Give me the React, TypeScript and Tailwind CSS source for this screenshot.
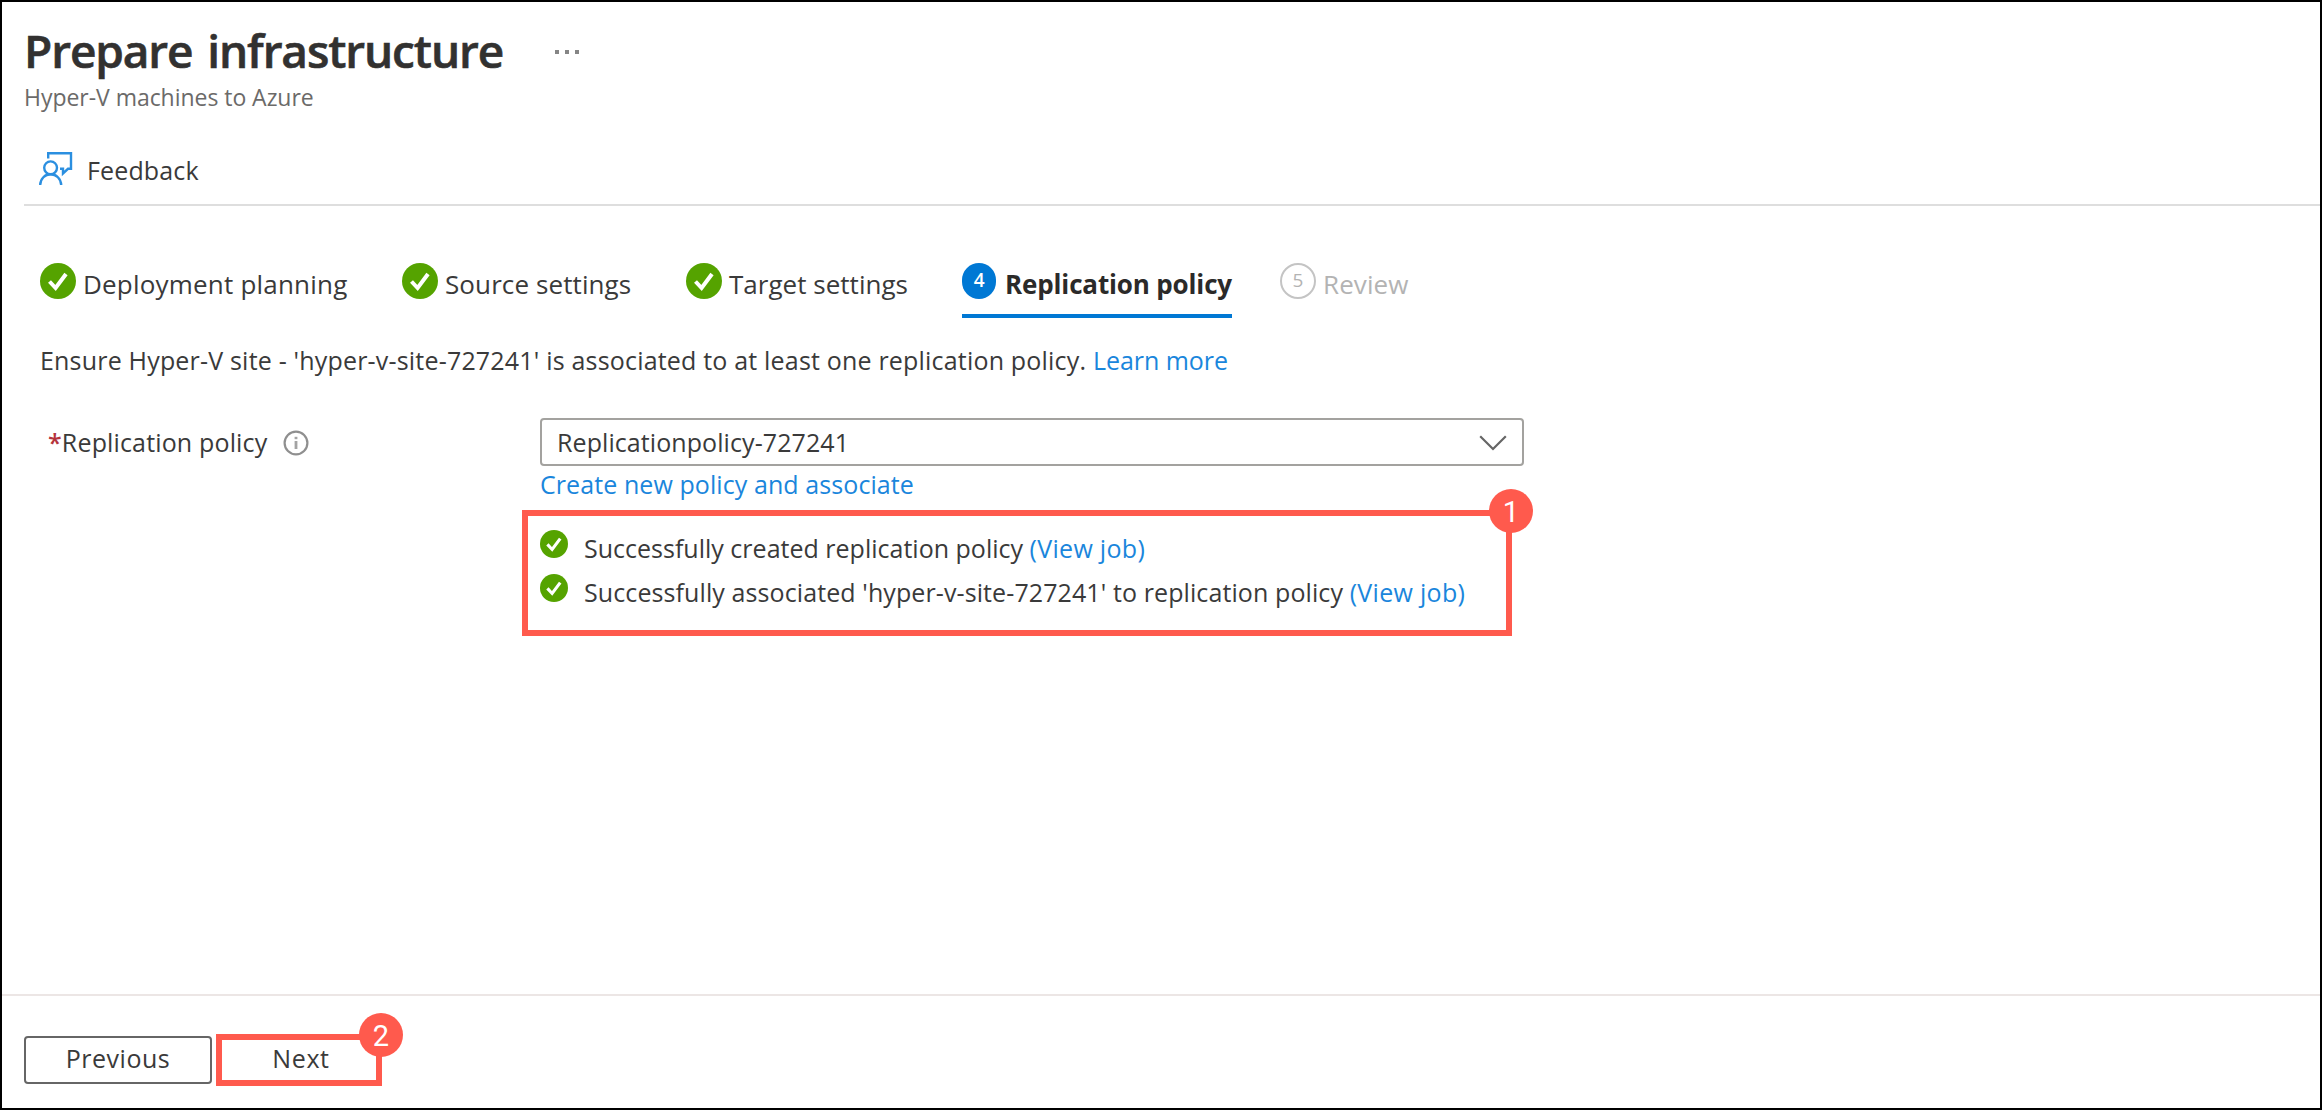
import type { ReactNode } from 'react';

function CheckCircle({ className }: { className: string }) {
  return (
    <svg viewBox="0 0 36 36" className={className}>
      <circle cx="18" cy="18" r="18" fill="#55a300" />
      <path d="M9.5 18.5 L15.6 25 L26 11" fill="none" stroke="#fff" strokeWidth="4" />
    </svg>
  );
}

function FeedbackIcon() {
  return (
    <svg viewBox="0 0 34 34" className="mb-1 h-[34px] w-[34px] shrink-0" fill="none" stroke="#2b8fe0" strokeWidth="2.4">
      <path d="M9.2 6.5 V1.2 H32 V16.8 H29 L24 21.4 V16.8 H21" />
      <circle cx="11.6" cy="15.8" r="6.4" />
      <path d="M1.2 33 C1.4 26.6 6 22.3 11.6 22.3 C17.2 22.3 21.9 26.6 22.2 33" />
    </svg>
  );
}

function InfoIcon() {
  return (
    <svg viewBox="0 0 26 26" className="ml-4 h-[26px] w-[26px] shrink-0">
      <circle cx="13" cy="13" r="11.4" fill="none" stroke="#8f8f8f" strokeWidth="2.2" />
      <rect x="11.6" y="11" width="2.8" height="8" fill="#a3a3a3" />
      <rect x="11.6" y="6.8" width="2.8" height="2.4" fill="#a3a3a3" />
    </svg>
  );
}

function Badge({ children }: { children: ReactNode }) {
  return (
    <span className="absolute -top-[27px] -right-[27px] flex h-11 w-11 items-center justify-center rounded-full bg-[#ff5a4d] pt-[3px] font-['Roboto',sans-serif] text-[29px] leading-none tracking-normal text-white">
      {children}
    </span>
  );
}

function DoneStep({ label, className }: { label: string; className: string }) {
  return (
    <div className={`flex h-[60px] items-center gap-[7px] ${className}`}>
      <CheckCircle className="mb-[7px] h-9 w-9 shrink-0" />
      <span>{label}</span>
    </div>
  );
}

export default function App() {
  return (
    <div className="flex h-[1110px] w-[2322px] flex-col overflow-hidden border-2 border-black bg-white font-['Open_Sans',sans-serif] text-[25px] whitespace-nowrap text-[#3a3a3a]">
      <header className="pt-[18px] pl-[22px]">
        <div className="flex h-[60px] items-center">
          <h1 className="w-[531px] text-[46px] leading-[60px] font-semibold tracking-[-1.12px] text-[#323130] [-webkit-text-stroke:0.6px_#323130] [word-spacing:4px]">Prepare infrastructure</h1>
          <div className="mt-[4px] flex gap-[6px]">
            <i className="h-1 w-1 bg-[#858585]" />
            <i className="h-1 w-1 bg-[#858585]" />
            <i className="h-1 w-1 bg-[#858585]" />
          </div>
        </div>
        <p className="h-[34px] text-[23px] leading-[34px] tracking-[-0.04px] text-[#6b6a69]">Hyper-V machines to Azure</p>
        <div className="flex h-[92px] items-center border-b-2 border-[#dedede] pt-6 pl-[15px]">
          <FeedbackIcon />
          <span className="ml-[14px] tracking-[0.15px]">Feedback</span>
        </div>
      </header>

      <main className="grow pl-[38px]">
        <nav className="flex h-[112px] pt-12 text-[26px] tracking-[0.1px]">
          <DoneStep label="Deployment planning" className="w-[362px] tracking-[0.2px]" />
          <DoneStep label="Source settings" className="w-[284px]" />
          <DoneStep label="Target settings" className="w-[276px] tracking-[0.02px]" />
          <div className="mr-12 flex w-[270px] items-center border-b-4 border-[#0078d4] font-bold tracking-[-0.15px] text-[#2b2a29]">
            <span className="mb-[7px] flex h-9 w-[35px] items-center justify-center rounded-full bg-[#0078d4] text-[19px] leading-none font-semibold text-white">4</span>
            <span className="ml-[9px]">Replication policy</span>
          </div>
          <div className="flex h-[60px] items-center text-[#b3b3b3]">
            <span className="mb-[7px] flex h-9 w-9 items-center justify-center rounded-full border-2 border-[#c4c4c4] text-[19px] leading-none">5</span>
            <span className="ml-[7px]">Review</span>
          </div>
        </nav>

        <p className="mt-[22px] h-10 leading-10 tracking-[0.19px]">
          Ensure Hyper-V site - 'hyper-v-site-727241' is associated to at least one replication policy.{' '}
          <a className="tracking-[-0.05px] text-[#1a86dc]">Learn more</a>
        </p>

        <div className="mt-[38px] flex">
          <label className="flex h-12 w-[500px] items-center pt-[2px] pl-2 tracking-[0.15px]">
            <span className="font-semibold text-[#b5343c]">*</span>
            Replication policy
            <InfoIcon />
          </label>
          <div className="w-[984px]">
            <div className="flex h-12 items-center justify-between rounded-[4px] border-2 border-[#a3a29f] pt-px pr-[15px] pl-[15px]">
              <span className="tracking-[0.08px]">Replicationpolicy-727241</span>
              <svg viewBox="0 0 28 16" className="h-4 w-7" fill="none" stroke="#666" strokeWidth="2.2">
                <path d="M1.2 1.2 L14 14 L26.8 1.2" />
              </svg>
            </div>
            <a className="block h-9 leading-9 tracking-[0.08px] text-[#1a86dc]">Create new policy and associate</a>
            <div className="relative mt-2 -ml-[18px] h-[126px] w-[990px] border-6 border-[#ff5a4d] pt-[11px] pl-3">
              <div className="flex h-11 items-center">
                <CheckCircle className="mb-[10px] h-7 w-7 shrink-0" />
                <span className="ml-4 tracking-[0.01px]">
                  Successfully created replication policy <a className="tracking-[0.3px] text-[#1a86dc]">(View job)</a>
                </span>
              </div>
              <div className="flex h-11 items-center">
                <CheckCircle className="mb-[10px] h-7 w-7 shrink-0" />
                <span className="ml-4 tracking-[0.1px]">
                  Successfully associated 'hyper-v-site-727241' to replication policy <a className="tracking-[0.3px] text-[#1a86dc]">(View job)</a>
                </span>
              </div>
              <Badge>1</Badge>
            </div>
          </div>
        </div>
      </main>

      <footer className="flex h-[114px] shrink-0 items-start gap-1 border-t-2 border-[#ece6e5] pl-[22px]">
        <button className="mt-10 flex h-12 w-[188px] items-center justify-center rounded-[4px] border-2 border-[#666] pb-[3px] tracking-[0.5px]">Previous</button>
        <button className="relative mt-[38px] flex h-[52px] w-[166px] items-center justify-center border-6 border-[#ff5a4d] pb-[3px] pl-1 tracking-[0.6px]">
          Next
          <Badge>2</Badge>
        </button>
      </footer>
    </div>
  );
}
